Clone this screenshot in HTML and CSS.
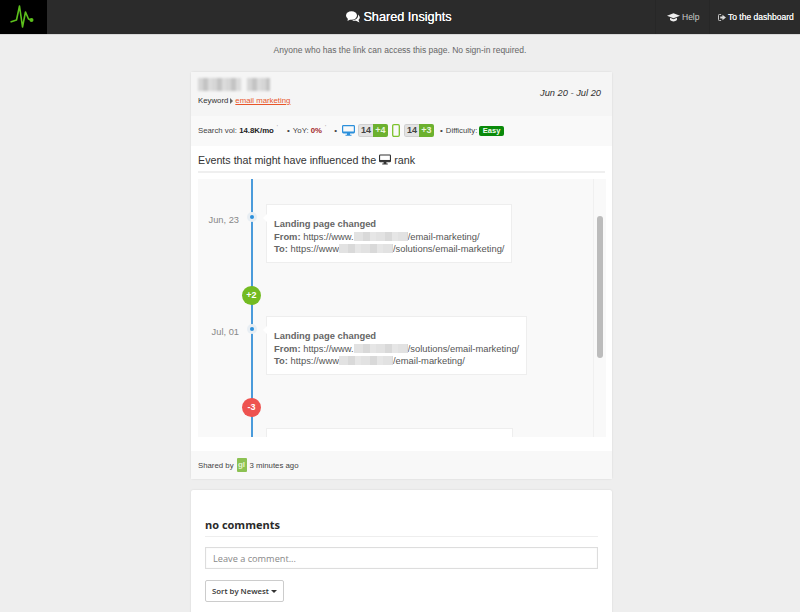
FILE: index.html
```html
<!DOCTYPE html>
<html lang="en">
<head>
<meta charset="utf-8">
<title>Shared Insights</title>
<link rel="stylesheet" href="styles.css">
</head>
<body>
<header class="topbar">
  <div class="left">
    <a class="logo" href="#">
      <svg width="30" height="26" viewBox="0 0 30 26"><path d="M1.500 18 L7.500 16 L10.500 2 L13.500 23 L16.500 8 L19.500 15 L22.500 16" fill="none" stroke="#5cc01c" stroke-width="1.600" stroke-linejoin="round"/><circle cx="22.500" cy="16" r="2" fill="#5cc01c"/></svg>
    </a>
  </div>
  <h1 class="brand">
    <svg class="brand-icon" width="14" height="12" viewBox="0 0 14 12"><ellipse cx="5.500" cy="4.500" rx="5.500" ry="4.200" fill="#fff"/><path d="M2 7 L1.500 10 L5 8Z" fill="#fff"/><path d="M12 3.500 C14 5 14.500 7.500 12.500 9 L13.500 11.500 L10 9.800 C8.500 10 7 9.700 6 9.200 C9.500 9.300 12.800 7 12 3.500Z" fill="#fff"/></svg>
    <span>Shared Insights</span>
  </h1>
  <nav class="topnav">
    <a class="navlink help" href="#">
      <svg width="13" height="9" viewBox="0 0 15 10"><path d="M7.500 0 L15 3 L7.500 6 L0 3Z" fill="#eee"/><path d="M3.500 5.300 V8 C5.500 10 9.500 10 11.500 8 V5.300 L7.500 6.900Z" fill="#eee"/></svg>
      <span>Help</span>
    </a>
    <a class="navlink dash" href="#">
      <svg width="8" height="7" viewBox="0 0 9 8"><path d="M3.500 .5 H1.500 Q.5 .5 .5 1.500 V6.500 Q.5 7.500 1.500 7.500 H3.500" fill="none" stroke="#ddd"/><path d="M2.500 2.800 H5 V.8 L9 4 L5 7.200 V5.200 H2.500Z" fill="#ddd"/></svg>
      <span>To the dashboard</span>
    </a>
  </nav>
</header>

<p class="notice">Anyone who has the link can access this page. No sign-in required.</p>

<main class="page">
  <section class="card insight">
    <div class="card-head">
      <div class="head-left">
        <div class="blur-title"><i></i><i></i></div>
        <div class="keyword">Keyword <span class="caret"></span> <a href="#">email marketing</a></div>
      </div>
      <div class="dates">Jun 20 - Jul 20</div>
    </div>
    <div class="stats">
      <span>Search vol: <b>14.8K/mo</b></span><sup class="tick">'</sup>
      <span class="bullet b1">•</span>
      <span>YoY: <b class="red">0%</b></span><sup class="tick">'</sup>
      <span class="bullet">•</span>
      <svg class="desk" width="13" height="11" viewBox="0 0 13 11"><rect x=".6" y=".6" width="11.800" height="7.300" rx=".8" fill="none" stroke="#2b8fdb" stroke-width="1.200"/><rect x="1" y="6.500" width="11" height="1.500" fill="#2b8fdb"/><path d="M5 8 H8 V9.800 H9.500 V10.800 H3.500 V9.800 H5Z" fill="#2b8fdb"/></svg>
      <span class="rank"><span class="num">14</span><span class="up">+4</span></span>
      <svg class="phone" width="8" height="13" viewBox="0 0 8 13"><rect x=".7" y=".7" width="6.600" height="11.600" rx="1.200" fill="none" stroke="#7cc22c" stroke-width="1.300"/></svg>
      <span class="rank"><span class="num">14</span><span class="up">+3</span></span>
      <span class="bullet b2">•</span>
      <span>Difficulty:</span>
      <span class="easy">Easy</span>
    </div>
    <div class="events-title">
      <h2>Events that might have influenced the
        <svg width="12" height="11" viewBox="0 0 13 11"><rect x=".6" y=".6" width="11.800" height="7.400" rx=".8" fill="none" stroke="#333" stroke-width="1.200"/><rect x="1" y="6" width="11" height="2" fill="#333"/><path d="M5 8 H8 V9.800 H9.500 V10.800 H3.500 V9.800 H5Z" fill="#333"/></svg>
        rank</h2>
    </div>
    <div class="timeline">
      <div class="track">
        <div class="event">
          <div class="date">Jun, 23</div>
          <div class="node"><i></i></div>
          <div class="note">
            <strong>Landing page changed</strong>
            <div><strong>From:</strong> https://www.<i class="mask"></i>/email-marketing/</div>
            <div><strong>To:</strong> https://www<i class="mask"></i>/solutions/email-marketing/</div>
          </div>
        </div>
        <div class="delta"><span class="pill green">+2</span></div>
        <div class="event">
          <div class="date">Jul, 01</div>
          <div class="node"><i></i></div>
          <div class="note">
            <strong>Landing page changed</strong>
            <div><strong>From:</strong> https://www.<i class="mask"></i>/solutions/email-marketing/</div>
            <div><strong>To:</strong> https://www<i class="mask"></i>/email-marketing/</div>
          </div>
        </div>
        <div class="delta"><span class="pill red-bg">-3</span></div>
        <div class="event last">
          <div class="date"></div>
          <div class="node"></div>
          <div class="note stub"></div>
        </div>
      </div>
      <div class="scrollbar"><div class="thumb"></div></div>
    </div>
    <div class="card-foot">Shared by <span class="avatar">gl</span> 3 minutes ago</div>
  </section>

  <section class="card comments">
    <h3>no comments</h3>
    <input class="comment-input" type="text" placeholder="Leave a comment...">
    <button class="sort" type="button">Sort by Newest <span class="down"></span></button>
  </section>
</main>
</body>
</html>
```
FILE: styles.css
```css
* { box-sizing: border-box; }
html, body { margin: 0; height: 612px; overflow: hidden; }
body { background: #eee; font-family: "Liberation Sans", Arial, sans-serif; color: #333; font-size: 9px; }
a { text-decoration: none; }

.topbar { height: 35px; background: #2b2b2b; border-bottom: 1px solid #d8d8d8; display: grid; grid-template-columns: 1fr auto 1fr; }
.left { display: flex; }
.logo { width: 47px; background: #000; display: flex; align-items: center; justify-content: center; }
.brand { margin: 0; padding: 0 2px 1px 0; display: flex; align-items: center; gap: 3px; color: #fff; font-size: 12.700px; font-weight: normal; text-shadow: 0 0 .5px #fff; }
.topnav { display: flex; justify-content: flex-end; }
.navlink { display: flex; align-items: center; gap: 2px; font-size: 8.500px; height: 34px; border-left: 1px solid #272727; }
.help { width: 54px; padding-left: 11px; color: #ccc; }
.dash { width: 91px; padding-left: 8px; color: #f0f0f0; text-shadow: 0 0 .4px #fff; }

.notice { margin: 0; height: 37px; padding-top: 10px; text-align: center; font-size: 8.500px; line-height: 11px; color: #666; }

.page { width: 421px; margin: 0 0 0 191px; }
.card { background: #fff; box-shadow: 0 0 2px rgba(0,0,0,.12); border-radius: 2px; }
.insight { height: 407px; display: flex; flex-direction: column; }

.card-head { height: 44px; background: #f5f5f5; padding: 5px 11px 0 7px; display: flex; justify-content: space-between; }
.blur-title { display: flex; gap: 6px; height: 14px; margin-top: 1px; }
.blur-title i { display: block; height: 13px; background: repeating-linear-gradient(90deg, #d6d6d6 0 5px, #c4c4c4 5px 10px, #dcdcdc 10px 14px); filter: blur(1px); }
.blur-title i:first-child { width: 43px; }
.blur-title i:last-child { width: 23px; }
.keyword { margin-top: 3px; font-size: 7.800px; line-height: 11px; color: #333; display: flex; align-items: center; gap: 2px; }
.keyword a { color: #e8562a; text-decoration: underline; }
.caret { width: 0; height: 0; border-left: 3px solid #666; border-top: 3px solid transparent; border-bottom: 3px solid transparent; }
.dates { font-style: italic; font-size: 9.300px; line-height: 12px; margin-top: 10px; color: #333; }

.stats { height: 30px; background: #f9f9f9; padding: 0 7px 1px; display: flex; align-items: center; font-size: 7.800px; color: #444; white-space: nowrap; }
.stats b { color: #222; }
.stats b.red { color: #a3262a; }
.tick { font-size: 6px; color: #999; margin: -8px 0 0 3px; line-height: 6px; }
.bullet { margin: 0 3px 0 8px; font-size: 8px; }
.b1 { margin-left: 9px; }
.b2 { margin-left: 6px; }
.desk { margin: 0 3px 0 2px; }
.phone { margin: 0 4px; }
.rank { display: inline-flex; height: 13px; border-radius: 2px; overflow: hidden; font-weight: bold; font-size: 9px; line-height: 13px; text-align: center; }
.num { width: 15px; background: #e3e3e3; border: 1px solid #d0d0d0; border-right: 0; border-radius: 2px 0 0 2px; line-height: 11px; color: #444; }
.up { width: 15px; background: #6cb12f; color: #e8f5d8; }
.easy { margin-left: 2px; background: #0a8a0a; color: #f2fff2; font-weight: bold; font-size: 7.500px; line-height: 10px; padding: 0 3.500px; border-radius: 2px; }

.events-title { margin: 0 7px; height: 27px; border-bottom: 2px solid #efefef; padding-top: 8px; }
.events-title h2 { margin: 0; font-size: 10.700px; line-height: 13px; font-weight: normal; color: #333; }
.events-title svg { vertical-align: -1px; }

.timeline { margin: 6px 6px 0 7px; height: 258px; background: #f9f9f9; overflow: hidden; position: relative; flex: none; }
.track { position: relative; padding-top: 25px; height: 100%; }
.track::before { content: ""; position: absolute; left: 53px; top: 0; bottom: 0; width: 2px; background: #4a9bdb; }
.event { display: flex; position: relative; }
.date { width: 41px; padding-top: 11px; font-size: 9.300px; line-height: 11px; color: #888; text-align: right; }
.node { width: 27px; flex: none; padding: 8px 0 0 8px; }
.node i { display: block; width: 10px; height: 10px; border-radius: 50%; background: #e8eef3; position: relative; }
.node i::after { content: ""; position: absolute; left: 3px; top: 3px; width: 4px; height: 4px; border-radius: 50%; background: #2b8fdb; }
.note { position: relative; background: #fff; border: 1px solid #eee; padding: 13px 7px 8px; font-size: 9.400px; line-height: 12.500px; color: #555; white-space: nowrap; height: 59px; }
.note strong { color: #666; }
.note::before { content: ""; position: absolute; left: -4px; top: 9px; width: 0; height: 0; border-right: 4px solid #fff; border-top: 4px solid transparent; border-bottom: 4px solid transparent; }
.stub { width: 247px; }
.mask { display: inline-block; width: 54px; height: 9px; vertical-align: -1px; background: repeating-linear-gradient(90deg, #e2e2e2 0 9px, #d9d9d9 9px 16px, #e6e6e6 16px 22px); filter: blur(.7px); }
.delta { height: 53px; padding: 23px 0 0 44px; position: relative; }
.pill { display: block; width: 19px; height: 19px; border-radius: 50%; color: #fff; font-size: 9px; font-weight: bold; line-height: 19px; text-align: center; }
.green { background: #73bb22; }
.red-bg { background: #ee5350; }

.scrollbar { position: absolute; right: 0; top: 0; bottom: 0; width: 13px; background: #f9f9f9; border-left: 1px solid #f0f0f0; }
.thumb { position: absolute; left: 3px; top: 37px; width: 6px; height: 142px; border-radius: 3px; background: #bcbcbc; }

.card-foot { margin-top: auto; height: 28px; background: #f8f8f8; padding-left: 7px; display: flex; align-items: center; gap: 2px; font-size: 7.800px; color: #444; }
.avatar { width: 10px; height: 14px; background: #8cc152; border-radius: 1px; color: #e5f3d0; font-size: 8px; font-weight: bold; line-height: 14px; text-align: center; margin: 0 1px; }

.comments { height: 130px; margin-top: 11px; padding: 28px 14px 0; font-family: "Open Sans", "Noto Sans", sans-serif; }
.comments h3 { margin: 0; height: 19px; border-bottom: 1px solid #eee; font-size: 11px; line-height: 14px; font-weight: bold; color: #2a2a2a; }
.comment-input { display: block; width: 393px; height: 22px; margin-top: 10px; border: 1px solid #ddd; box-shadow: inset 0 0 1px #ddd; padding: 0 7px; font: 9.200px "Open Sans", "Noto Sans", sans-serif; background: #fff; outline: none; }
.comment-input::placeholder { color: #888; opacity: 1; }
.sort { display: block; margin-top: 11px; width: 79px; height: 22px; padding: 0; background: #fff; border: 1px solid #ccc; border-radius: 2px; font: 600 7.800px "Open Sans", "Noto Sans", sans-serif; color: #333; text-align: center; }
.down { display: inline-block; width: 0; height: 0; border-top: 3px solid #333; border-left: 3px solid transparent; border-right: 3px solid transparent; vertical-align: 1px; }
```
